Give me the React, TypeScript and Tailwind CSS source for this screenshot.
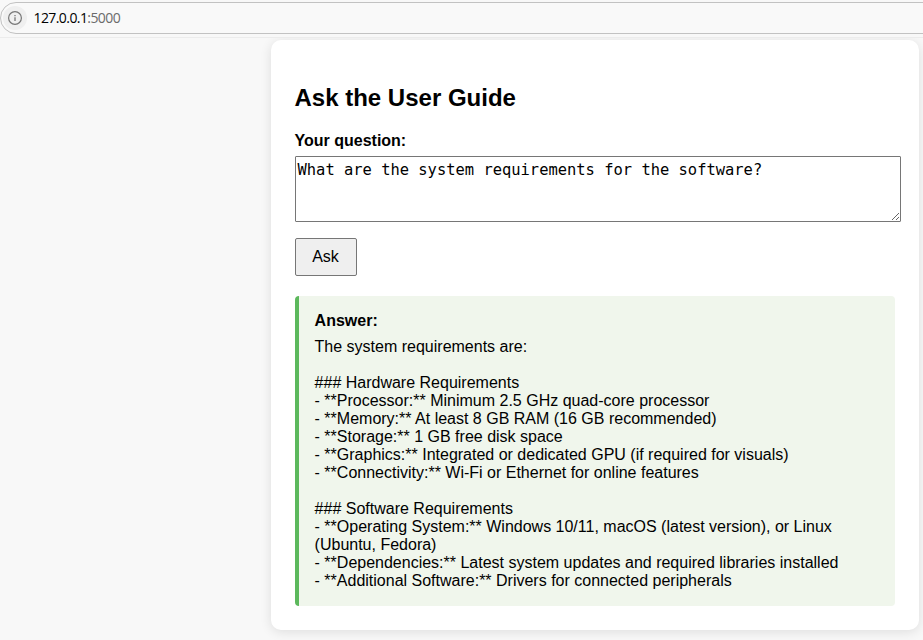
const answer = `The system requirements are:

### Hardware Requirements
- **Processor:** Minimum 2.5 GHz quad-core processor
- **Memory:** At least 8 GB RAM (16 GB recommended)
- **Storage:** 1 GB free disk space
- **Graphics:** Integrated or dedicated GPU (if required for visuals)
- **Connectivity:** Wi-Fi or Ethernet for online features

### Software Requirements
- **Operating System:** Windows 10/11, macOS (latest version), or Linux (Ubuntu, Fedora)
- **Dependencies:** Latest system updates and required libraries installed
- **Additional Software:** Drivers for connected peripherals`;

function AddressBar() {
  return (
    <header className="h-[38px] shrink-0 border-b border-[#ececec] bg-[#f8f8f8] pt-[2px]">
      <div className="-mr-5 flex h-8 items-center rounded-l-full border border-[#c2c2c2] bg-[#f9f9f9] pl-[2px]">
        <span className="flex size-6 items-center justify-center rounded-full bg-[#efefef]">
          <svg width="14" height="14" viewBox="0 0 14 14" fill="none" stroke="#767676">
            <circle cx="7" cy="7" r="6.4" strokeWidth="1.2" />
            <path d="M7 6.2V10" strokeWidth="1.3" />
            <path d="M7 4V5.2" strokeWidth="1.3" />
          </svg>
        </span>
        <span className="ml-[6.5px] font-['Open_Sans',sans-serif] text-sm leading-5 tracking-[-0.58px] text-black">
          127.0.0.1<span className="text-[#6b6b6b]">:5000</span>
        </span>
      </div>
    </header>
  );
}

export default function App() {
  return (
    <div className="flex h-[640px] w-[923px] flex-col overflow-hidden bg-[#f8f8f8] font-['Liberation_Sans',Arial,sans-serif] text-base text-black">
      <AddressBar />
      <div className="min-h-0 flex-1 overflow-hidden pt-[2px]">
        <main className="ml-[271px] h-[590px] w-[648px] rounded-[10px] bg-white px-6 pt-[44px] shadow-[0_2px_12px_#0000001c]">
          <h2 className="-ml-[0.5px] text-2xl leading-7 font-bold">Ask the User Guide</h2>
          <form onSubmit={(e) => e.preventDefault()}>
            <label htmlFor="question" className="mt-5 -ml-[0.5px] block leading-[18px] font-bold">
              Your question:
            </label>
            <textarea
              id="question"
              spellCheck={false}
              className="mt-[6px] block h-[66px] w-[606px] resize rounded-[1px] border border-[#767676] bg-white px-[1.5px] py-[3px] font-['DejaVu_Sans_Mono',monospace] text-[15.45px] leading-5 outline-none"
              defaultValue="What are the system requirements for the software?"
            />
            <button
              type="submit"
              className="mt-4 block h-[38px] w-[62px] rounded-[2px] border border-[#767676] bg-[#efefef] pr-[1px] leading-[18px]"
            >
              Ask
            </button>
          </form>
          <section className="mt-5 h-[310px] w-[600px] rounded-[4px] border-l-4 border-[#5cb85c] bg-[#f0f6ec] px-[15.6px] pt-4">
            <div className="leading-[18px] font-bold">Answer:</div>
            <div className="mt-2 leading-[18px] whitespace-pre-wrap">{answer}</div>
          </section>
        </main>
      </div>
    </div>
  );
}
